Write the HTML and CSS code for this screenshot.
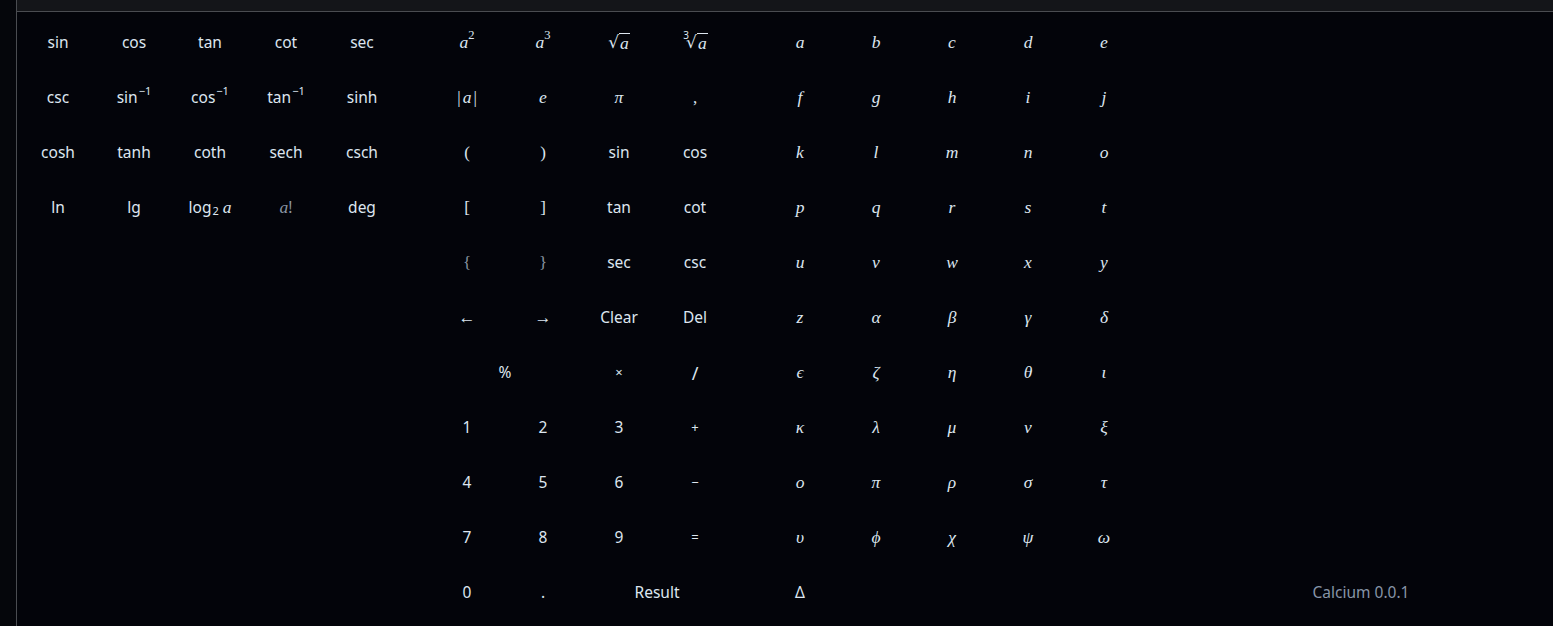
FILE: index.html
```html
<!DOCTYPE html>
<html>
<head>
<meta charset="utf-8">
<link rel="stylesheet" href="styles.css">
</head>
<body>
<div class="app">
  <aside class="side"></aside>
  <main class="main">
    <div class="topbar"></div>
    <div class="pad">
      <div class="group g5">
        <div class="key">sin</div><div class="key">cos</div><div class="key">tan</div><div class="key">cot</div><div class="key">sec</div>
        <div class="key">csc</div><div class="key">sin<sup>−1</sup></div><div class="key">cos<sup>−1</sup></div><div class="key">tan<sup>−1</sup></div><div class="key">sinh</div>
        <div class="key">cosh</div><div class="key">tanh</div><div class="key">coth</div><div class="key">sech</div><div class="key">csch</div>
        <div class="key">ln</div><div class="key">lg</div><div class="key">log<sub>2</sub><i class="m sp">a</i></div><div class="key dim"><i class="m">a</i>!</div><div class="key">deg</div>
      </div>
      <div class="group g4">
        <div class="key"><i class="m">a</i><sup class="ms">2</sup></div>
        <div class="key"><i class="m">a</i><sup class="ms">3</sup></div>
        <div class="key"><span class="rad">√</span><span class="ov"><i class="m">a</i></span></div>
        <div class="key"><sup class="idx">3</sup><span class="rad">√</span><span class="ov"><i class="m">a</i></span></div>
        <div class="key"><span class="bar">|</span><i class="m">a</i><span class="bar">|</span></div>
        <div class="key"><i class="m">e</i></div>
        <div class="key"><i class="m">π</i></div>
        <div class="key"><span class="mr">,</span></div>
        <div class="key"><span class="mr">(</span></div><div class="key"><span class="mr">)</span></div><div class="key">sin</div><div class="key">cos</div>
        <div class="key"><span class="mr">[</span></div><div class="key"><span class="mr">]</span></div><div class="key">tan</div><div class="key">cot</div>
        <div class="key dim"><span class="mr">{</span></div><div class="key dim"><span class="mr">}</span></div><div class="key">sec</div><div class="key">csc</div>
        <div class="key"><span class="mr">←</span></div><div class="key"><span class="mr">→</span></div><div class="key">Clear</div><div class="key">Del</div>
        <div class="key span2">%</div><div class="key small">×</div><div class="key slash">/</div>
        <div class="key">1</div><div class="key">2</div><div class="key">3</div><div class="key small">+</div>
        <div class="key">4</div><div class="key">5</div><div class="key">6</div><div class="key small">−</div>
        <div class="key">7</div><div class="key">8</div><div class="key">9</div><div class="key small">=</div>
        <div class="key">0</div><div class="key">.</div><div class="key span2">Result</div>
      </div>
      <div class="group g5 letters">
        <div class="key"><i class="m">a</i></div><div class="key"><i class="m">b</i></div><div class="key"><i class="m">c</i></div><div class="key"><i class="m">d</i></div><div class="key"><i class="m">e</i></div>
        <div class="key"><i class="m">f</i></div><div class="key"><i class="m">g</i></div><div class="key"><i class="m">h</i></div><div class="key"><i class="m">i</i></div><div class="key"><i class="m">j</i></div>
        <div class="key"><i class="m">k</i></div><div class="key"><i class="m">l</i></div><div class="key"><i class="m">m</i></div><div class="key"><i class="m">n</i></div><div class="key"><i class="m">o</i></div>
        <div class="key"><i class="m">p</i></div><div class="key"><i class="m">q</i></div><div class="key"><i class="m">r</i></div><div class="key"><i class="m">s</i></div><div class="key"><i class="m">t</i></div>
        <div class="key"><i class="m">u</i></div><div class="key"><i class="m">v</i></div><div class="key"><i class="m">w</i></div><div class="key"><i class="m">x</i></div><div class="key"><i class="m">y</i></div>
        <div class="key"><i class="m">z</i></div><div class="key"><i class="m">α</i></div><div class="key"><i class="m">β</i></div><div class="key"><i class="m">γ</i></div><div class="key"><i class="m">δ</i></div>
        <div class="key"><i class="m">ϵ</i></div><div class="key"><i class="m">ζ</i></div><div class="key"><i class="m">η</i></div><div class="key"><i class="m">θ</i></div><div class="key"><i class="m">ι</i></div>
        <div class="key"><i class="m">κ</i></div><div class="key"><i class="m">λ</i></div><div class="key"><i class="m">μ</i></div><div class="key"><i class="m">ν</i></div><div class="key"><i class="m">ξ</i></div>
        <div class="key"><i class="m">ο</i></div><div class="key"><i class="m">π</i></div><div class="key"><i class="m">ρ</i></div><div class="key"><i class="m">σ</i></div><div class="key"><i class="m">τ</i></div>
        <div class="key"><i class="m">υ</i></div><div class="key"><i class="m">ϕ</i></div><div class="key"><i class="m">χ</i></div><div class="key"><i class="m">ψ</i></div><div class="key"><i class="m">ω</i></div>
        <div class="key">Δ</div>
      </div>
      <div class="group g5 info">
        <div class="key version">Calcium 0.0.1</div>
      </div>
    </div>
  </main>
</div>
</body>
</html>
```

FILE: styles.css
```css
html, body {
  margin: 0;
  padding: 0;
  height: 100%;
  background: #03040a;
  overflow: hidden;
}
body {
  font-family: "Noto Sans", "DejaVu Sans", sans-serif;
  font-size: 15.5px;
  color: #dde6f0;
}
.app {
  display: flex;
  height: 100vh;
}
.side {
  width: 16px;
  flex: none;
  background: #05060b;
  border-right: 1px solid #4a4c51;
}
.main {
  flex: 1;
  display: flex;
  flex-direction: column;
  min-width: 0;
}
.topbar {
  height: 11px;
  flex: none;
  background: #141519;
  border-bottom: 1px solid #4a4c51;
}
.pad {
  display: flex;
  gap: 29px;
  padding: 3px 0 0 3px;
}
.group {
  display: grid;
  grid-auto-rows: 55px;
  flex: none;
}
.g5 { grid-template-columns: repeat(5, 76px); }
.g4 { grid-template-columns: repeat(4, 76px); }
.info { grid-template-rows: repeat(11, 55px); }
.version {
  grid-column: 2 / span 3;
  grid-row: 11;
  color: #8795a8;
}
.key {
  display: flex;
  align-items: center;
  justify-content: center;
  white-space: nowrap;
  line-height: 1;
}
.span2 { grid-column: span 2; }
.dim { color: #8a95a3; }
.small { font-size: 13px; }
.slash { font-size: 18px; }
.m {
  font-family: "Liberation Serif", "Times New Roman", serif;
  font-style: italic;
  font-size: 17.5px;
}
.sp { margin-left: 4px; }
.mr {
  font-family: "Liberation Serif", serif;
  font-size: 17px;
}
sup, sub {
  font-size: 11px;
  line-height: 0;
  position: relative;
  vertical-align: baseline;
}
sup { top: -0.6em; margin-left: 1px; }
sub { top: 0.35em; margin-left: 1px; }
.ms {
  font-family: "Liberation Serif", serif;
  font-size: 12.5px;
  top: -0.6em;
  margin-left: 0;
}
.idx {
  font-family: "Noto Sans", sans-serif;
  font-size: 10px;
  top: -0.75em;
  margin-right: -3px;
}
.rad {
  font-family: "DejaVu Serif", serif;
  font-size: 17px;
}
.ov {
  border-top: 1px solid #dde6f0;
  padding: 1px 1px 0 1px;
  line-height: 1;
}
.bar {
  font-family: "Liberation Serif", serif;
  font-size: 17px;
  margin: 0 2px;
}
```
